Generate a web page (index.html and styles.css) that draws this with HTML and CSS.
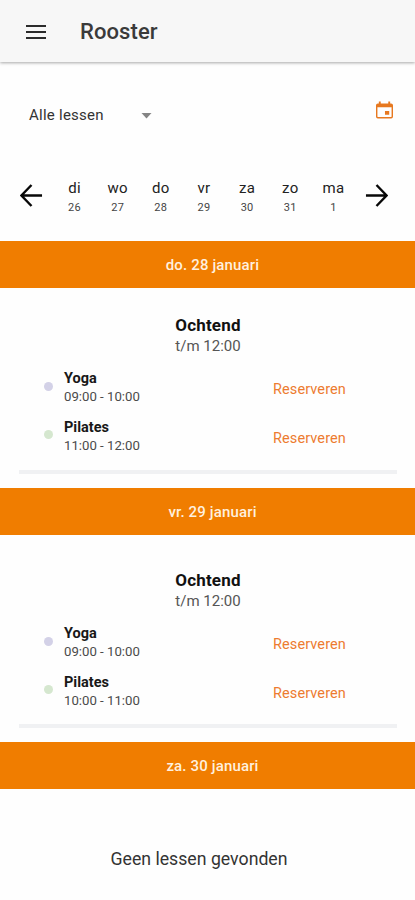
FILE: index.html
```html
<!DOCTYPE html>
<html lang="nl">
<head>
<meta charset="utf-8">
<title>Rooster</title>
<link rel="stylesheet" href="styles.css">
</head>
<body>
<header class="appbar">
  <svg class="menu" viewBox="0 0 20 14"><path d="M0 1h20M0 7h20M0 13h20"/></svg>
  <h1>Rooster</h1>
</header>
<div class="filter">
  <span class="filter-label">Alle lessen</span>
  <svg class="caret" viewBox="0 0 10 6"><path d="M0 0h10L5 5.5z"/></svg>
  <svg class="calendar" viewBox="0 0 18 18"><path fill-rule="evenodd" d="M3 0h2v2h8V0h2v2h1q2 0 2 2v12q0 2-2 2H2q-2 0-2-2V4q0-2 2-2h1zM1.500 6v9.500q0 1 1 1h13q1 0 1-1V6zM9.500 10h4.500v4H9.500z"/></svg>
</div>
<nav class="week">
  <svg class="arrow" viewBox="0 0 24 24"><path d="M23 12H2M12 1L1.500 12L12 23"/></svg>
  <ol class="days">
    <li><b>di</b><span>26</span></li>
    <li><b>wo</b><span>27</span></li>
    <li><b>do</b><span>28</span></li>
    <li><b>vr</b><span>29</span></li>
    <li><b>za</b><span>30</span></li>
    <li><b>zo</b><span>31</span></li>
    <li><b>ma</b><span>1</span></li>
  </ol>
  <svg class="arrow" viewBox="0 0 24 24"><path d="M1 12H22M12 1L22.500 12L12 23"/></svg>
</nav>
<h2 class="date"><span>do. 28 januari</span></h2>
<section class="block">
  <h3>Ochtend</h3>
  <p class="until">t/m 12:00</p>
  <div class="lesson">
    <i class="dot lilac"></i>
    <div class="info"><h4>Yoga</h4><p>09:00 - 10:00</p></div>
    <a class="reserve">Reserveren</a>
  </div>
  <div class="lesson">
    <i class="dot green"></i>
    <div class="info"><h4>Pilates</h4><p>11:00 - 12:00</p></div>
    <a class="reserve">Reserveren</a>
  </div>
  <hr>
</section>
<h2 class="date"><span>vr. 29 januari</span></h2>
<section class="block later">
  <h3>Ochtend</h3>
  <p class="until">t/m 12:00</p>
  <div class="lesson">
    <i class="dot lilac"></i>
    <div class="info"><h4>Yoga</h4><p>09:00 - 10:00</p></div>
    <a class="reserve">Reserveren</a>
  </div>
  <div class="lesson">
    <i class="dot green"></i>
    <div class="info"><h4>Pilates</h4><p>10:00 - 11:00</p></div>
    <a class="reserve">Reserveren</a>
  </div>
  <hr>
</section>
<h2 class="date"><span>za. 30 januari</span></h2>
<p class="empty">Geen lessen gevonden</p>
</body>
</html>
```
FILE: styles.css
```css
* { box-sizing: border-box; margin: 0; padding: 0; }
body { font-family: Roboto, "Liberation Sans", sans-serif; background: #fefefe; color: #222; height: 900px; overflow: hidden; }
svg { display: block; flex: none; }
.appbar { display: flex; align-items: center; height: 62px; padding: 1px 0 0 26px; background: #f7f7f7; box-shadow: 0 1px 3px rgba(0,0,0,.34); }
.menu { width: 20px; height: 14px; stroke: #2b2b2b; stroke-width: 1.8; }
.appbar h1 { margin-left: 34px; font-size: 22px; font-weight: 500; line-height: 26px; letter-spacing: .1px; color: #3a3a3a; }
.filter { display: flex; align-items: center; height: 106px; padding: 0 22px 0 29px; }
.filter-label { width: 112px; font-size: 15px; line-height: 20px; letter-spacing: .25px; color: #333; }
.caret { width: 11px; height: 6px; margin-top: 2px; fill: #858585; }
.calendar { width: 17px; height: 18px; margin: -10px 0 0 auto; fill: #e7781f; }
.week { display: flex; align-items: center; height: 73px; padding: 0 27px 19px 20px; }
.arrow { width: 23px; height: 23px; fill: none; stroke: #080808; stroke-width: 2.5; }
.days { display: flex; width: 302px; margin: 5px 10px 0; list-style: none; }
.days li { flex: 1; text-align: center; }
.days b { display: block; font-size: 15px; font-weight: 400; line-height: 19px; letter-spacing: .3px; }
.days span { display: block; font-size: 11px; line-height: 19px; letter-spacing: .3px; color: #444; }
.date { display: flex; justify-content: center; align-items: center; height: 47px; padding: 1px 0 0 10px; background: #f07d00; color: #fff0df; font-size: 15px; font-weight: 500; letter-spacing: .15px; }
.block { height: 200px; padding-top: 26px; }
.later { height: 207px; padding-top: 34px; }
.block h3 { font-size: 17px; line-height: 22px; font-weight: 700; letter-spacing: .2px; padding-left: 1px; text-align: center; color: #111; }
.until { font-size: 15px; line-height: 20px; padding-left: 1px; text-align: center; color: #555; }
.lesson { display: flex; align-items: center; height: 48.5px; padding-left: 44px; }
.until + .lesson { margin-top: 8px; }
.dot { width: 9px; height: 9px; border-radius: 50%; margin-top: -4px; }
.lilac { background: #d3d1e7; }
.green { background: #d5e7cf; }
.info { width: 209px; margin-left: 11px; }
.info h4 { font-size: 14.5px; line-height: 19px; font-weight: 700; color: #181818; }
.info p { font-size: 13.2px; line-height: 17px; margin-bottom: 2px; color: #4b4b4b; }
.reserve { font-size: 14.5px; line-height: 20px; letter-spacing: .1px; color: #ed7b30; margin-top: 4px; }
hr { height: 4px; margin: 9px 18px 0 19px; border: 0; background: #f0f1f3; }
.later hr { margin-top: 8px; }
.empty { margin-top: 59px; padding-right: 17px; text-align: center; font-size: 17.7px; line-height: 22px; color: #333; }
```
